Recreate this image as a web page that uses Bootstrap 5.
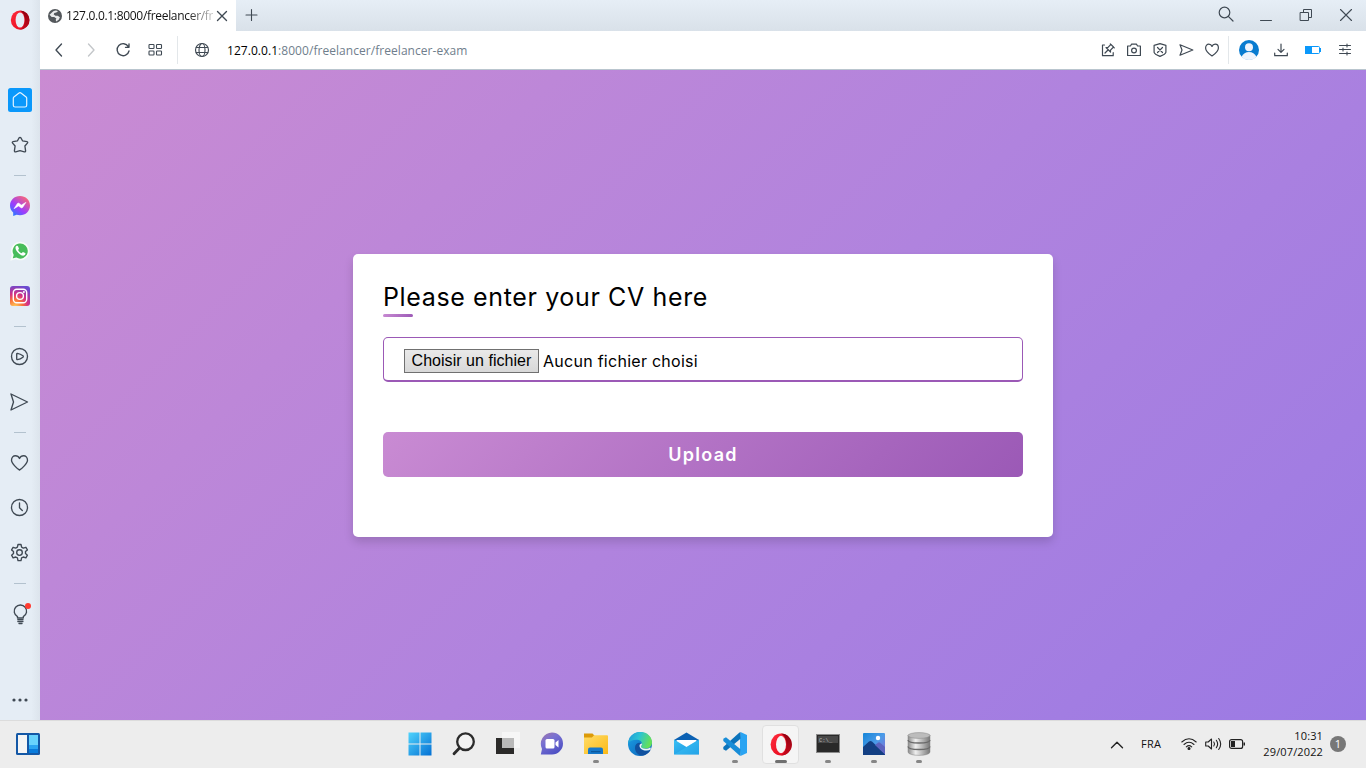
<!DOCTYPE html>
<html lang="fr">
<head>
<meta charset="utf-8">
<meta name="viewport" content="width=device-width, initial-scale=1">
<title>127.0.0.1:8000/freelancer/freelancer-exam</title>
<link rel="stylesheet" href="https://cdn.jsdelivr.net/npm/bootstrap@5.3.0/dist/css/bootstrap.min.css">
<style>
  body { font-family: "Open Sans", "Noto Sans", sans-serif; font-size: 12px; color: #111; }
  svg { display: block; flex: none; overflow: visible; }
  .ln { fill: none; stroke: #3f4953; stroke-width: 1.35; stroke-linecap: round; stroke-linejoin: round; }
  /* sidebar */
  .side { width: 40px; background: linear-gradient(90deg, #e5edf5 0 78%, #dce4ec); }
  .side-logo { height: 40px; margin-bottom: 37.5px; }
  .slot { height: 45px; display: flex; align-items: center; justify-content: center; flex: none; }
  .rule { height: 16px; padding: 7.5px 14px; flex: none; }
  .rule::before { content: ""; display: block; height: 1px; background: #b3c2ce; }
  .side-more { height: 41px; }
  /* tabs and address bar */
  .tabs { height: 31px; background: linear-gradient(#e6eef6, #d9e1e9); }
  .tab { width: 196px; padding: 0 8px 0 8px; background: #fff; }
  .tab-text { margin-left: 4px; letter-spacing: -.31px; color: transparent; background: linear-gradient(90deg, #111 82%, #ccc); -webkit-background-clip: text; background-clip: text; }
  .bar { height: 39px; border-bottom: 1px solid #b9c5ce; }
  .cell32 { width: 32px; } .cell26 { width: 26px; } .cell40 { width: 40px; }
  .cell32, .cell26, .cell40 { display: flex; justify-content: center; flex: none; }
  .sep { width: 1px; height: 28px; background: #e3e7ea; }
  .addr { color: #6f7e8c; letter-spacing: .05px; margin-left: 9px; padding-top: 2px; }
  /* page */
  .page { background: linear-gradient(135deg, #ca8bd2, #b083de 53%, #9b7ae4); }
  .panel { width: 700px; height: 283px; padding: 25px 30px; border-radius: 5px; box-shadow: 0 5px 10px rgba(0,0,0,.15); font-family: Inter, sans-serif; color: #000; }
  .panel h1 { font-size: 25px; font-weight: 400; line-height: 36px; height: 38px; margin: 0; letter-spacing: .63px; white-space: nowrap; }
  .accent { width: 30px; height: 3px; border-radius: 5px; background: linear-gradient(135deg, #c98bd3, #9b59b6); margin-bottom: 20px; margin-top: -3px; }
  .file-box { height: 45px; border: 1px solid #9b59b6; border-bottom-width: 2px; border-radius: 5px; padding: 4px 20px 0; font-size: 16px; letter-spacing: .27px; }
  .choose { font: 16px/22px "Liberation Sans", sans-serif; width: 135px; height: 24px; border: 1px solid #707070; background: linear-gradient(#e9e9e9, #d8d8d8); margin-right: 4px; color: #000; white-space: nowrap; letter-spacing: .04px; }
  .send { height: 45px; margin-top: 50px; border: 0; border-radius: 5px; color: #fff; font-size: 18px; font-weight: 600; letter-spacing: 1.3px; background: linear-gradient(135deg, #c98bd3, #9b59b6); }
  /* taskbar */
  .task { height: 48px; background: #ededed; border-top: 1px solid #dcdcdc; }
  .app { height: 47px; width: 46px; padding-bottom: 1px; display: flex; align-items: center; justify-content: center; flex: none; position: relative; }
  .apps-a .app { width: 44px; }
  .apps-a { margin-left: 358px; }
  .run::after { content: ""; position: absolute; bottom: 5px; left: 50%; width: 6px; height: 3px; margin-left: -3px; border-radius: 2px; background: #868686; }
  .run.active::after { width: 12px; margin-left: -6px; background: #6f6f6f; }
  .active::before { content: ""; position: absolute; inset: 4px 5px 4px 4px; background: #f5f5f5; border: 1px solid #e0e0e0; border-radius: 4px; }
  .active svg { position: relative; }
  .clock { font-size: 11px; line-height: 16px; letter-spacing: .13px; padding-bottom: 2px; white-space: nowrap; }
  .note { width: 16px; height: 16px; border-radius: 50%; background: #777; color: #fff; font-size: 11px; line-height: 16px; margin-bottom: 1px; }
</style>
</head>
<body class="vh-100 overflow-hidden d-flex flex-column">
<svg width="0" height="0" class="position-absolute">
  <defs>
    <linearGradient id="op" x1="0" x2="1" y2="1"><stop stop-color="#ff2b3c"/><stop offset="1" stop-color="#e3061b"/></linearGradient>
    <linearGradient id="opd" x2="0" y2="1"><stop stop-color="#8f0010"/><stop offset="1" stop-color="#c60a1c"/></linearGradient>
    <linearGradient id="ms" x1="0" y1="1" x2=".8" y2="0"><stop stop-color="#0a8cff"/><stop offset=".45" stop-color="#9a3dff"/><stop offset="1" stop-color="#ff6a70"/></linearGradient>
    <radialGradient id="ig" cx=".25" cy="1.05" r="1.1"><stop stop-color="#ffd35a"/><stop offset=".35" stop-color="#f9703b"/><stop offset=".6" stop-color="#d42f86"/><stop offset="1" stop-color="#6a4bd0"/></radialGradient>
    <linearGradient id="win" x2="1" y2="1"><stop stop-color="#4fd3fc"/><stop offset="1" stop-color="#0470d4"/></linearGradient>
    <linearGradient id="fold" x2="1" y2="1"><stop stop-color="#ffdc68"/><stop offset="1" stop-color="#fbb916"/></linearGradient>
    <linearGradient id="chat" x2=".6" y2="1"><stop stop-color="#a076a8"/><stop offset=".4" stop-color="#7a72d2"/><stop offset="1" stop-color="#4e50c4"/></linearGradient>
    <linearGradient id="edg" x1="0" x2="1" y2=".3"><stop stop-color="#1e96d8"/><stop offset=".5" stop-color="#2cc3d3"/><stop offset="1" stop-color="#63e05a"/></linearGradient>
    <linearGradient id="edb" x2="1" y2="1"><stop stop-color="#1ba4e6"/><stop offset="1" stop-color="#0c5cb5"/></linearGradient>
    <linearGradient id="cyl" x2="1"><stop stop-color="#8b8b8b"/><stop offset=".35" stop-color="#efefef"/><stop offset="1" stop-color="#777"/></linearGradient>
    <linearGradient id="mail" x2="1" y2="1"><stop stop-color="#3bc2f5"/><stop offset="1" stop-color="#148ddd"/></linearGradient>
    <linearGradient id="pic" x2="1" y2="1"><stop stop-color="#1485d8"/><stop offset=".5" stop-color="#4c9be8"/><stop offset="1" stop-color="#8b67d0"/></linearGradient>
    <g id="opera"><ellipse cx="12" cy="12" rx="10" ry="10.500" fill="url(#op)"/><path d="M12 1.500A10.500 10.500 0 0 1 12 22.500C15 21 17.300 17 17.300 12S15 3 12 1.500Z" fill="url(#opd)"/><ellipse cx="12" cy="12" rx="4.800" ry="8.300" fill="var(--hole)"/></g>
  </defs>
</svg>

<main class="d-flex flex-grow-1">
  <aside class="side d-flex flex-column flex-shrink-0">
    <div class="side-logo d-flex align-items-center justify-content-center"><svg width="22" height="22" viewBox="0 0 24 24" style="--hole:#e5edf5"><use href="#opera"/></svg></div>
    <div class="slot"><svg width="24" height="24"><rect width="24" height="24" rx="2.500" fill="#0a98fb"/><path d="M5.300 10.300Q5.300 9.500 5.900 9l4.800-3.800q1.300-1 2.600 0L18.100 9q.6.5.6 1.300v6.900q0 1.800-1.800 1.800H7.100q-1.800 0-1.800-1.800Z" fill="none" stroke="#e3f3ff" stroke-width="1.200"/></svg></div>
    <div class="slot"><svg class="ln" width="24" height="24"><path d="M11 5q1-1.400 2 0l1.500 2.800 4.400.8q1.300.4.500 1.500l-2.500 2.900.7 4.800q0 1.500-1.300 1L12 17.700l-4.300 1.100q-1.300.3-1.300-1l.7-4.800-2.500-2.900q-.8-1.100.5-1.500l4.400-.8Z"/></svg></div>
    <div class="rule"></div>
    <div class="slot"><svg width="24" height="24"><path d="M12 2C6.300 2 2 6.200 2 11.500c0 2.900 1.200 5.200 3.200 6.900V22l3.400-1.200c1 .3 2.200.5 3.400.5 5.700 0 10-4.300 10-9.800S17.700 2 12 2Z" fill="url(#ms)"/><path d="m6 14.700 3.200-5q.9-1.200 2.100-.3l2.100 1.600 4.600-2.700-3.200 5q-.9 1.200-2.100.3l-2.100-1.600Z" fill="#fff" stroke="#fff" stroke-width=".5"/></svg></div>
    <div class="slot"><svg width="24" height="24"><path d="M3.500 20.500l1.300-4.500A8.400 8.400 0 1 1 8 19.300Z" fill="#48bd5a" stroke="#f8fcf8" stroke-width="1.700"/><path d="M8.700 6.700c-1.900 1-1.400 3.700.5 6.100 2.300 2.900 5.200 4.600 7.200 3.500 1.200-.7 1.300-2 .8-2.300l-2.300-1.100-1.300 1.300c-1.500-.5-2.900-1.800-3.500-3.300l.9-1.200-1-2.400c-.3-.6-.8-.8-1.300-.6Z" fill="#fff"/></svg></div>
    <div class="slot"><svg width="24" height="24"><rect x="2" y="2" width="20" height="20" rx="3" fill="url(#ig)"/><rect x="5.300" y="5.300" width="13.400" height="13.400" rx="3.500" fill="none" stroke="#fff" stroke-width="1.400"/><circle cx="12" cy="12" r="3.400" fill="none" stroke="#fff" stroke-width="1.400"/><circle cx="15.900" cy="8.100" r="1" fill="#fff"/></svg></div>
    <div class="rule"></div>
    <div class="slot"><svg class="ln" width="24" height="24"><circle cx="11.500" cy="11.500" r="8"/><path d="M8.700 9q0-.7.700-.6 3 .5 5.500 2.400.8.700 0 1.400-2.500 1.900-5.500 2.400-.7.100-.7-.6Z"/></svg></div>
    <div class="slot"><svg class="ln" width="24" height="24"><path d="m3 4 16.500 8L3 20l2.500-8Z"/></svg></div>
    <div class="rule"></div>
    <div class="slot"><svg class="ln" width="24" height="24"><path d="M11.500 19C10 18.500 3.500 12.500 3.500 9.200 3.500 6.500 5.300 4.700 7.400 4.700c1.800 0 3.300 1 4.100 2.800.8-1.800 2.300-2.800 4.100-2.800 2.100 0 3.900 1.800 3.900 4.500 0 3.300-6.500 9.300-8 9.800Z"/></svg></div>
    <div class="slot"><svg class="ln" width="24" height="24"><circle cx="11.500" cy="11.500" r="8"/><path d="M11.500 7v4.800l2.800 2.800"/></svg></div>
    <div class="slot"><svg class="ln" width="24" height="24"><path d="M10 3.500h3l.6 2.700 1.700.9 2.600-.8 1.500 2.600-1.900 1.700v1.900l1.900 1.700-1.500 2.600-2.600-.8-1.700.9-.6 2.700h-3l-.6-2.700-1.700-.9-2.600.8-1.500-2.600 1.900-1.700v-1.900L3.600 8.900l1.500-2.600 2.600.8 1.700-.9Z"/><circle cx="11.500" cy="11.500" r="2.800"/></svg></div>
    <div class="rule"></div>
    <div class="slot"><svg class="ln" width="24" height="24"><path d="M9.500 16v-1.300a6.200 6.200 0 1 1 5.800 0V16Z"/><path d="M9.800 17.700h5.200M9.800 19.600h5.200M11 21.500h3"/><circle cx="20" cy="4" r="3" fill="#ff3b30" stroke="none"/></svg></div>
    <div class="side-more mt-auto d-flex align-items-center justify-content-center"><svg width="16" height="4" fill="#3f4953"><circle cx="2" cy="2" r="1.600"/><circle cx="8" cy="2" r="1.600"/><circle cx="14" cy="2" r="1.600"/></svg></div>
  </aside>

  <section class="d-flex flex-column flex-grow-1">
    <div class="tabs d-flex">
      <div class="tab d-flex align-items-center">
        <svg width="14" height="14"><circle cx="7" cy="7" r="7" fill="#54585c"/><path d="M5.300 2.300Q8 1 10 2.200L8.300 3.500 6.300 4 5.700 5.500 7.500 6.700h2.200l2.200 1.500-1.200 2.600-2.500 1.700-.5-1.800.7-1.200-2.200-1.600H3.700L1.500 5.700Z" fill="#fff" opacity=".88"/></svg>
        <span class="tab-text text-nowrap">127.0.0.1:8000/freelancer/fr</span>
        <svg class="ln ms-auto" width="12" height="12"><path d="m1.500 1.500 9 9m0-9-9 9"/></svg>
      </div>
      <div class="d-flex align-items-center ps-2 pb-1"><svg class="ln ms-1" width="12" height="12" style="stroke-width:1.100"><path d="M-2 6.500h11M3.500 1v11" transform="translate(0 .5)"/></svg></div>
      <div class="d-flex align-items-center ms-auto" style="padding-bottom:2px">
        <div class="cell40"><svg class="ln" width="16" height="16" style="stroke-width:1.200"><circle cx="6.500" cy="5.500" r="5.300"/><path d="m10.300 9.300 4.700 4.700"/></svg></div>
        <div class="cell40"><svg class="ln" width="12" height="12" style="stroke-width:1"><path d="M.5 11.500h11"/></svg></div>
        <div class="cell40"><svg class="ln" width="12" height="12" style="stroke-width:1"><path d="M.5 3.500h8v8h-8ZM3.500 3.500v-3h8v8h-3"/></svg></div>
        <div class="cell40"><svg class="ln" width="12" height="12" style="stroke-width:1.100"><path d="m.5.500 11 11m0-11-11 11"/></svg></div>
      </div>
    </div>
    <div class="bar bg-white d-flex align-items-center">
      <div class="cell32" style="margin-left:3px"><svg class="ln" width="14" height="14"><path d="M9.500 1 4 7l5.500 6"/></svg></div>
      <div class="cell32"><svg class="ln" width="14" height="14" style="stroke:#c3c6c9"><path d="m4.500 1 5.500 6-5.500 6"/></svg></div>
      <div class="cell32"><svg class="ln" width="14" height="14"><path d="M12.300 3.600A6 6 0 1 0 13 8M13 .8v3.500H9.500"/></svg></div>
      <div class="cell32"><svg class="ln" width="14" height="12" style="stroke-width:1.100"><rect x="1" y=".5" width="5" height="4" rx=".7"/><rect x="8.500" y=".5" width="5" height="4" rx=".7"/><rect x="1" y="7" width="5" height="4" rx=".7"/><rect x="8.500" y="7" width="5" height="4" rx=".7"/></svg></div>
      <div class="sep" style="margin-left:6px"></div>
      <div class="cell32 ms-2"><svg class="ln" width="14" height="14" style="stroke-width:1.150"><circle cx="7" cy="7" r="6.500"/><ellipse cx="7" cy="7" rx="3" ry="6.500"/><path d="M1.300 4.500h11.400M1.300 9.500h11.400"/></svg></div>
      <div class="addr text-nowrap"><span class="text-black">127.0.0.1</span>:8000/freelancer/freelancer-exam</div>
      <div class="d-flex align-items-center ms-auto">
        <div class="cell26"><svg class="ln" width="14" height="14" style="stroke-width:1.200"><path d="M3.500 2h-2v10.700h10.700v-3M4 10l3-3M5 4.500 9.500 9V7.200L12.500 4 9.900 1.300 7 4.400Z M9.300.8l4 4"/></svg></div>
        <div class="cell26"><svg class="ln" width="14" height="14" style="stroke-width:1.200"><path d="M.6 3h2.800l1.200-1.800h4.800L10.600 3h2.800v9.500H.6Z"/><circle cx="7" cy="7.500" r="2.400"/></svg></div>
        <div class="cell26"><svg class="ln" width="14" height="14" style="stroke-width:1.200"><path d="M7 .7 12.900 2.300v7Q12.500 11 7 13.400 1.500 11 1.100 9.300v-7ZM4.500 4.500l5 5m0-5-5 5"/></svg></div>
        <div class="cell26"><svg class="ln" width="14" height="14" style="stroke-width:1.200"><path d="M1 1.800 13.800 7 1 12.200 3 7Z"/></svg></div>
        <div class="cell26"><svg class="ln" width="14" height="14" style="stroke-width:1.200"><path d="M7 13C3.500 10.500.6 8 .6 4.900.6 2.500 2.200 1.200 3.800 1.200 5.300 1.200 6.500 2 7 3.500c.5-1.500 1.700-2.300 3.200-2.300 1.600 0 3.200 1.300 3.200 3.700C13.400 8 10.500 10.500 7 13Z"/></svg></div>
        <div class="sep" style="margin-left:3px"></div>
        <div class="cell40"><svg width="20" height="20"><circle cx="10" cy="10" r="10" fill="#087bd0"/><circle cx="10" cy="7.200" r="4" fill="#eef3fc"/><path d="M2.500 16.700Q5 12 10 12t7.500 4.700Q14.500 20 10 20t-7.500-3.300Z" fill="#eef3fc"/></svg></div>
        <div class="cell32" style="margin-left:-4px"><svg class="ln" width="14" height="14" style="stroke-width:1.200"><path d="M7 1v8M4 6.300 7 9.300l3-3M.7 10v2.700h12.600V10"/></svg></div>
        <div class="cell32"><svg width="16" height="10"><rect x=".5" y="1.500" width="14" height="7" rx="1" fill="#fff" stroke="#0a98fb"/><path d="M0 1h7v8H0ZM15 3h1v4h-1Z" fill="#0a98fb"/></svg></div>
        <div class="cell32" style="margin-right:5px"><svg class="ln" width="12" height="12" style="stroke-width:1.100"><path d="M.5 1.500h11M.5 5.500h11M.5 9.500h11M8 0v3M4 4v3M8 8v3"/></svg></div>
      </div>
    </div>
    <div class="page flex-grow-1 d-flex align-items-center justify-content-center">
      <div class="panel bg-white">
        <h1>Please enter your CV here</h1>
        <div class="accent"></div>
        <div class="file-box d-flex align-items-center"><span class="choose text-center">Choisir un fichier</span><span>Aucun fichier choisi</span></div>
        <button class="send w-100 d-block" type="button">Upload</button>
      </div>
    </div>
  </section>
</main>

<footer class="task d-flex flex-shrink-0">
  <div class="app" style="margin-left:5px;margin-right:-11px"><svg width="24" height="22"><rect width="24" height="22" rx="1.500" fill="#1458a6"/><path d="M2 2h9v18H2Z" fill="#f5f5f5"/><path d="M13 2h9v10h-9Z" fill="#68d3fd"/><path d="M13 12h9v4h-9Z" fill="#2ba5f2"/><path d="M13 16h9v4h-9Z" fill="#087bdc"/></svg></div>
  <div class="apps-a d-flex">
    <div class="app"><svg width="24" height="24"><path d="M.5.500h11v11H.5Zm12 0h11v11h-11Zm-12 12h11v11H.5Zm12 0h11v11h-11Z" fill="url(#win)"/></svg></div>
    <div class="app"><svg width="24" height="24" fill="none" stroke="#2b2b2b" stroke-width="2.300" stroke-linecap="round"><circle cx="13.500" cy="9.700" r="8.300" fill="#f2f2f2"/><path d="m7.500 16-5.500 5.800" stroke-width="2.800"/></svg></div>
    <div class="app"><svg width="24" height="24"><path d="M0 6h18v16H0Z" fill="#2b2a29"/><path d="M6 0h18v16H6Z" fill="#f6f6f6"/><path d="M6 6h12v10H6Z" fill="#b9b9b9"/></svg></div>
    <div class="app"><svg width="24" height="24"><path d="M12 .5A11.400 11.400 0 0 0 2 17L.8 22.500H12a11 11 0 0 0 0-22Z" fill="url(#chat)"/><rect x="5.500" y="7" width="9" height="9.500" rx="1.500" fill="#fff"/><path d="m15.500 10.500 3-2.500v7.500l-3-2.500Z" fill="#fff"/></svg></div>
    <div class="app run"><svg width="24" height="24"><path d="M0 1.500h8.500L11 4.300 8 6H0Z" fill="#dc9a09"/><path d="M0 5.500h8l2-2.200h13q1 0 1 1V22H0Z" fill="url(#fold)"/><path d="M4 22v-4.500q0-2 2-2h11q2 0 2 2V22Z" fill="#1678ca"/><path d="M7 19h9.500v1.300H7Z" fill="#0b579d"/></svg></div>
    <div class="app"><svg width="24" height="24"><circle cx="12" cy="12" r="12" fill="url(#edb)"/><path d="M0 11.500C.8 4.500 6 0 12.200 0 19.500 0 24 5 24 10.300c0 4-2.900 6.300-6.500 6.300-3 0-4.500-1-4.500-2.200 0-.8 1-1 1-2.700 0-2-2-4-5.500-4C4.500 7.700 1.500 9 0 11.500Z" fill="url(#edg)"/><path d="M13.900 12.500C11 9 7 11.500 7 16c0 4 3.300 7.700 8 7.600 3.300-.8 6-2.800 7.500-5.500-4 2-9.500.5-9.500-3.500 0-.8.700-1.200.9-2.100Z" fill="#10519f"/><path d="M14 11.500c.2 2-1 2-1 3 0 1.200 1.500 2.300 4.500 2.300 2 0 3.500-.5 4.700-1.600l.8 2c-4.500 2.500-11.500 1-11.500-3.500 0-1.200 1-2.200 2.500-2.200Z" fill="#eaf3f4"/></svg></div>
  </div>
  <div class="app" style="width:50px;margin-left:-1px;margin-right:1px"><svg width="25" height="24"><path d="M0 8 12.500.5 25 8v5H0Z" fill="#0b61b3"/><path d="M2.500 8h20v8h-20Z" fill="#fff"/><path d="M0 7.500 12.500 15 25 7.500v15H0Z" fill="url(#mail)"/><path d="m0 22.500 25-15v15Z" fill="#3fc5f7" opacity=".4"/></svg></div>
  <div class="d-flex">
    <div class="app run"><svg width="24" height="24"><path d="m17.500 0 6.500 3v18l-6.500 3-.5-6V6Z" fill="#2aa4f2"/><path d="M17.500 6.800 3 18.700.3 17.200v-2.300L16.500.6l1-.4Z" fill="#0b73bb"/><path d="M17.500 17.200 3 5.300.3 6.800v2.300L16.500 23.400l1 .4Z" fill="#188dd8"/></svg></div>
    <div class="app run active"><svg width="26" height="25" viewBox="0 0 24 24" style="--hole:#f5f5f5"><use href="#opera"/></svg></div>
    <div class="app run" style="margin-left:1px"><svg width="24" height="20"><rect x=".5" y=".5" width="23" height="18" fill="#292929" stroke="#8c8c8c"/><path d="M2 2h20v7H2Z" fill="#484848"/><text x="3" y="8" fill="#b9b9b9" font-size="5.500" font-family="Liberation Mono,monospace">C:\_</text></svg></div>
    <div class="app run"><svg width="24" height="24"><rect x="1" y="1" width="22" height="22" rx="1" fill="url(#pic)"/><path d="M1 15 7 9.500q1.500-1.200 3 0L23 22v1H1Z" fill="#133f83"/><path d="m13 13 3-2.300q1-.7 2 0l5 4.300v7.500Z" fill="#5c63bf"/><circle cx="16" cy="6" r="2.200" fill="#fff"/></svg></div>
    <div class="app run" style="margin-left:-1px"><svg width="24" height="24" stroke="#858585" stroke-width=".5"><path d="M1 3v17c0 4.500 22 4.500 22 0V3Z" fill="url(#cyl)"/><path d="M1 8c0 4 22 4 22 0M1 14.500c0 4 22 4 22 0" fill="none" stroke="#6a6a6a" stroke-width="1.300"/><ellipse cx="12" cy="3.500" rx="11" ry="2.900" fill="#bcbcbc"/></svg></div>
  </div>
  <div class="d-flex align-items-center ms-auto" style="padding-right:20px">
    <svg class="ln" width="12" height="8" style="stroke:#222"><path d="M.5 6.700 6 1.200l5.500 5.500"/></svg>
    <span style="margin-left:18px;width:21px;font-size:11px;letter-spacing:.25px">FRA</span>
    <svg width="16" height="14" class="ln" style="stroke:#222;stroke-width:1.100;margin:0 0 2px 19px"><path d="M.8 5q7.200-6.500 14.400 0M3 7.500q5-4.500 10 0M5.300 9.800Q8 7.500 10.700 9.800"/><circle cx="8" cy="11.500" r="1" fill="#222"/></svg>
    <svg width="17" height="14" class="ln" style="stroke:#222;stroke-width:1.100;margin:0 0 2px 8px"><path d="M.7 5h2.500L6.500 2v10L3.200 9H.7ZM8.800 5q1.500 2 0 4M11.300 3.300q2.700 3.700 0 7.400M13.700 1.500q4 5.500 0 11"/></svg>
    <svg width="16" height="10" style="margin:0 0 2px 7px"><rect x=".6" y=".6" width="13" height="8.800" rx="2" fill="none" stroke="#222" stroke-width="1.200"/><path d="M2 2h4v6H2ZM14.500 3.500H16v3h-1.500Z" fill="#222"/></svg>
    <div class="clock text-end" style="margin-left:15px;width:63px">10:31<br>29/07/2022</div>
    <div class="note text-center" style="margin-left:7px">1</div>
  </div>
</footer>
<script src="https://cdn.jsdelivr.net/npm/bootstrap@5.3.0/dist/js/bootstrap.bundle.min.js"></script>
</body>
</html>
